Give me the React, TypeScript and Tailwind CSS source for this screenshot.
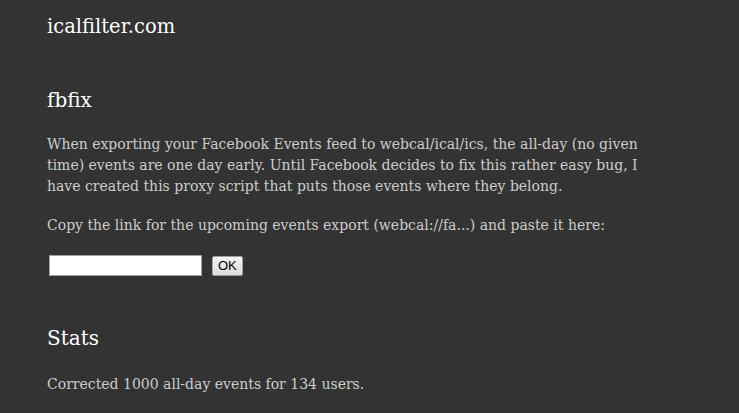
import React from 'react';

export default function App() {
  return (
    <div className="min-h-[413px] bg-[#333333] font-['DejaVu_Serif',serif] text-[#cccccc]">
      <div className="w-[640px] pl-[47px] pt-[14px]">
        <h1 className="text-[19.5px] leading-[26px] text-white">icalfilter.com</h1>
        <h2 className="mt-[46px] text-[20px] leading-[28px] text-white">fbfix</h2>
        <p className="mt-[20px] text-[14px] leading-[21px]">
          When exporting your Facebook Events feed to webcal/ical/ics, the all-day (no given time) events are one day
          early. Until Facebook decides to fix this rather easy bug, I have created this proxy script that puts those
          events where they belong.
        </p>
        <p className="mt-[18px] text-[14px] leading-[21px]">
          Copy the link for the upcoming events export (webcal://fa...) and paste it here:
        </p>
        <form className="mt-[19px] flex items-center gap-[10px] pl-[2px]" onSubmit={(e) => e.preventDefault()}>
          <input
            type="text"
            className="h-[21px] w-[153px] border border-[#a0a0a0] bg-white px-1 font-['Liberation_Sans',sans-serif] text-[13px] text-black"
          />
          <button
            type="submit"
            className="h-[20px] rounded-[2px] border border-[#a0a0a0] bg-gradient-to-b from-[#f4f4f4] to-[#dcdcdc] px-[5px] font-['Liberation_Sans',sans-serif] text-[13px] leading-[18px] text-black"
          >
            OK
          </button>
        </form>
        <h2 className="mt-[48px] text-[20px] leading-[28px] text-white">Stats</h2>
        <p className="mt-[22px] text-[14px] leading-[21px]">Corrected 1000 all-day events for 134 users.</p>
      </div>
    </div>
  );
}
